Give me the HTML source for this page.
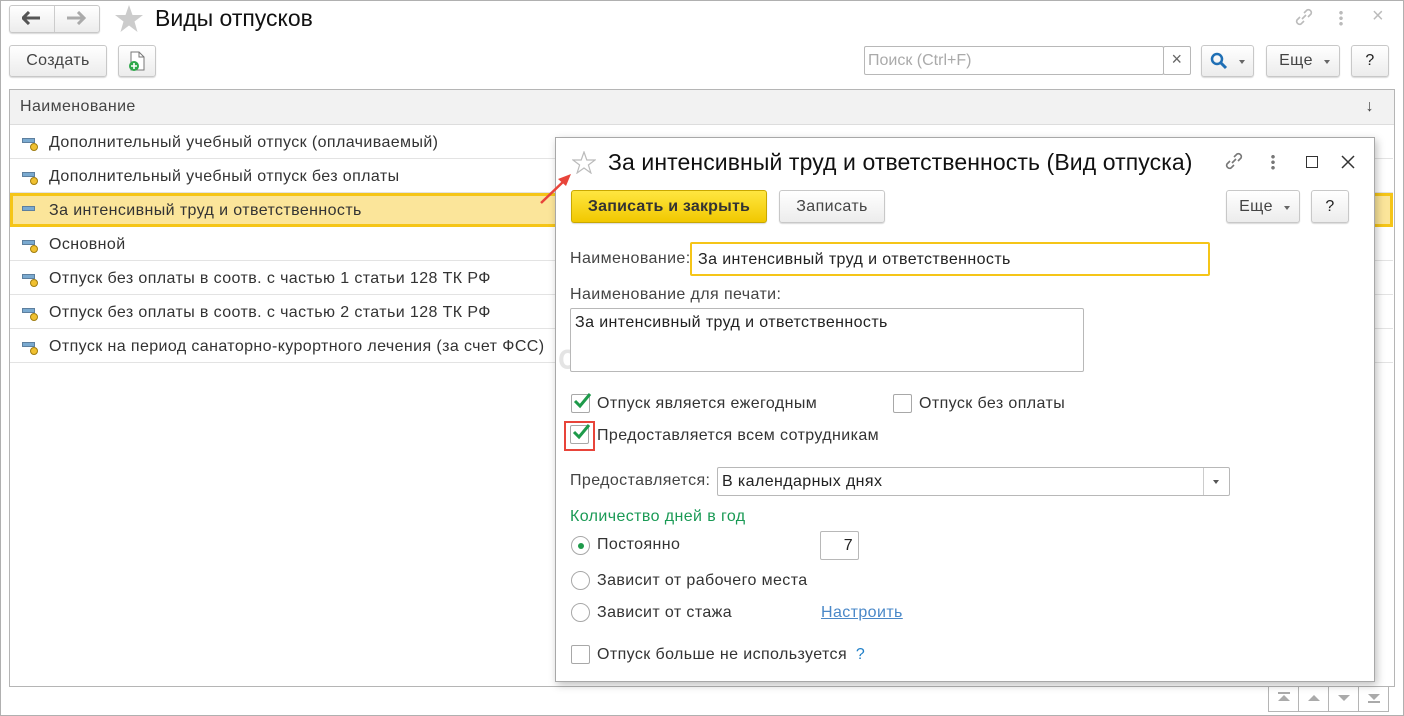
<!DOCTYPE html>
<html><head><meta charset="utf-8"><style>
*{box-sizing:border-box}
body{margin:0;width:1404px;height:716px;background:#fff;font-family:"Liberation Sans",Arial,sans-serif;font-size:16px;letter-spacing:.4px;color:#333;position:relative;overflow:hidden}
.a{position:absolute}
.btn{position:absolute;border:1px solid #c8c8c8;border-radius:3px;background:linear-gradient(#fff,#ececec);box-shadow:0 1px 1px rgba(0,0,0,.15);text-align:center;color:#444}
.row{position:absolute;left:10px;width:1383px;height:34px;border-bottom:1px solid #e3e3e3;line-height:35px}
.row span{position:absolute;left:39px}
.ic{position:absolute;left:12px;top:13px;width:13px;height:5px;background:#7aaad0;border:1px solid #5d7f9e}
.ic2{position:absolute;left:20px;top:18px;width:8px;height:8px;border-radius:50%;background:#f0c030;border:1px solid #a07d10}
.cb{position:absolute;width:19px;height:19px;border:1px solid #a8a8a8;border-radius:2px;background:#fff}
.rd{position:absolute;width:19px;height:19px;border:1px solid #a8a8a8;border-radius:50%;background:#fff}
.inp{position:absolute;border:1px solid #b8b8b8;border-radius:2px;background:#fff;padding-left:6px}
</style></head><body>
<div class="a" style="left:0;top:0;width:1404px;height:716px;border:1px solid #b0b0b0"></div>
<!-- nav -->
<div class="btn" style="left:9px;top:5px;width:91px;height:28px"></div>
<div class="a" style="left:54px;top:6px;width:1px;height:26px;background:#ccc"></div>
<svg class="a" style="left:22px;top:11px" width="20" height="14"><path d="M1 7H18M7 1L1 7L7 13" stroke="#555" stroke-width="3" fill="none"/></svg>
<svg class="a" style="left:66px;top:11px" width="20" height="14"><path d="M1 7H18M12 1L18 7L12 13" stroke="#aaa" stroke-width="3" fill="none"/></svg>
<svg class="a" style="left:114px;top:4px" width="30" height="29"><path d="M15 1L18.5 11H29L20.5 17.5L23.5 28L15 21.5L6.5 28L9.5 17.5L1 11H11.5Z" fill="#ccc"/></svg>
<div class="a" style="left:155px;top:5px;font-size:23px;letter-spacing:0;color:#111">Виды отпусков</div>
<svg class="a" style="left:1293px;top:6px" width="22" height="22"><path d="M9 13L13 9M7 11L4 14A3 3 0 0 0 8 18L11 15M15 11L18 8A3 3 0 0 0 14 4L11 7" stroke="#bbb" stroke-width="1.6" fill="none"/></svg>
<div class="a" style="left:1339px;top:10px;width:4px;height:16px;background:radial-gradient(circle,#bbb 1.6px,transparent 2px) 0 0/4px 5.5px"></div>
<div class="a" style="left:1372px;top:5px;font-size:20px;color:#bbb">×</div>
<!-- toolbar -->
<div class="btn" style="left:9px;top:45px;width:98px;height:32px;line-height:30px">Создать</div>
<div class="btn" style="left:118px;top:45px;width:38px;height:32px"></div>
<svg class="a" style="left:126px;top:50px" width="22" height="22"><path d="M5 2H13L18 7V20H5Z" fill="#fff" stroke="#777"/><path d="M13 2V7H18" fill="none" stroke="#777"/><circle cx="8" cy="16" r="5" fill="#2da84a"/><path d="M8 13V19M5 16H11" stroke="#fff" stroke-width="1.6"/></svg>
<div class="inp" style="left:864px;top:46px;width:300px;height:29px;line-height:28px;color:#aaa;padding-left:3px;letter-spacing:0">Поиск (Ctrl+F)</div>
<div class="inp" style="left:1163px;top:46px;width:28px;height:29px;line-height:25px;color:#666;padding:0;text-align:center;font-size:18px">×</div>
<div class="btn" style="left:1201px;top:45px;width:53px;height:32px"></div>
<svg class="a" style="left:1210px;top:52px" width="18" height="18"><circle cx="7" cy="7" r="5" stroke="#1f6fb5" stroke-width="2.5" fill="none"/><path d="M11 11L16 16" stroke="#1f6fb5" stroke-width="3"/></svg>
<div class="a" style="left:1239px;top:60px;border:3px solid transparent;border-top:4px solid #666"></div>
<div class="btn" style="left:1266px;top:45px;width:74px;height:32px;line-height:30px;padding-right:14px">Еще</div>
<div class="a" style="left:1324px;top:60px;border:3px solid transparent;border-top:4px solid #666"></div>
<div class="btn" style="left:1351px;top:45px;width:38px;height:32px;line-height:30px;color:#222">?</div>
<!-- list -->
<div class="a" style="left:9px;top:89px;width:1386px;height:598px;border:1px solid #b5b5b5"></div>
<div class="a" style="left:10px;top:90px;width:1384px;height:35px;background:#f2f2f2;border-bottom:1px solid #ddd;line-height:34px;padding-left:10px;color:#444">Наименование<span style="position:absolute;right:20px;font-size:16px">↓</span></div>
<div class="row" style="top:125px"><i class="ic"></i><i class="ic2"></i><span>Дополнительный учебный отпуск (оплачиваемый)</span></div>
<div class="row" style="top:159px"><i class="ic"></i><i class="ic2"></i><span>Дополнительный учебный отпуск без оплаты</span></div>
<div class="row" style="top:193px;background:#fbe59a;border:3px solid #f5c518;line-height:29px"><i class="ic" style="left:9px;top:10px"></i><span style="left:36px">За интенсивный труд и ответственность</span></div>
<div class="row" style="top:227px"><i class="ic"></i><i class="ic2"></i><span>Основной</span></div>
<div class="row" style="top:261px"><i class="ic"></i><i class="ic2"></i><span>Отпуск без оплаты в соотв. с частью 1 статьи 128 ТК РФ</span></div>
<div class="row" style="top:295px"><i class="ic"></i><i class="ic2"></i><span>Отпуск без оплаты в соотв. с частью 2 статьи 128 ТК РФ</span></div>
<div class="row" style="top:329px"><i class="ic"></i><i class="ic2"></i><span>Отпуск на период санаторно-курортного лечения (за счет ФСС)</span></div>
<!-- bottom nav -->
<div class="a" style="left:1268px;top:686px;width:121px;height:26px;border:1px solid #b5b5b5;border-top:none;display:flex">
<div style="flex:1;border-right:1px solid #b5b5b5;position:relative"><div class="a" style="left:9px;top:6px;width:12px;height:2px;background:#aaa"></div><div class="a" style="left:9px;top:9px;border:6px solid transparent;border-bottom:6px solid #aaa;border-top:0"></div></div>
<div style="flex:1;border-right:1px solid #b5b5b5;position:relative"><div class="a" style="left:9px;top:9px;border:6px solid transparent;border-bottom:6px solid #aaa;border-top:0"></div></div>
<div style="flex:1;border-right:1px solid #b5b5b5;position:relative"><div class="a" style="left:9px;top:9px;border:6px solid transparent;border-top:6px solid #aaa;border-bottom:0"></div></div>
<div style="flex:1;position:relative"><div class="a" style="left:9px;top:8px;border:6px solid transparent;border-top:6px solid #aaa;border-bottom:0"></div><div class="a" style="left:9px;top:15px;width:12px;height:2px;background:#aaa"></div></div>
</div>
<!-- dialog -->
<div class="a" style="left:555px;top:137px;width:820px;height:545px;background:#fff;border:1px solid #a8a8a8;box-shadow:2px 3px 8px rgba(0,0,0,.25)"></div>
<div class="a" style="left:558px;top:338px;font-size:32px;font-weight:bold;color:#e4e4e4;letter-spacing:1px">ꝏ БУХЭКСПЕРТ</div>
<svg class="a" style="left:572px;top:151px" width="24" height="23"><path d="M12 1L14.8 9H23L16.4 14L18.9 22L12 17L5.1 22L7.6 14L1 9H9.2Z" fill="none" stroke="#bbb" stroke-width="1.2"/></svg>
<svg class="a" style="left:538px;top:172px" width="36" height="34"><path d="M3 31L27 8" stroke="#e8443a" stroke-width="2.5"/><path d="M33 2L20 7L28 14Z" fill="#e8443a"/></svg>
<div class="a" style="left:608px;top:149px;font-size:23px;letter-spacing:.1px;color:#111">За интенсивный труд и ответственность (Вид отпуска)</div>
<svg class="a" style="left:1223px;top:150px" width="22" height="22"><path d="M9 13L13 9M7 11L4 14A3 3 0 0 0 8 18L11 15M15 11L18 8A3 3 0 0 0 14 4L11 7" stroke="#777" stroke-width="1.6" fill="none"/></svg>
<div class="a" style="left:1271px;top:154px;width:4px;height:16px;background:radial-gradient(circle,#777 1.6px,transparent 2px) 0 0/4px 5.5px"></div>
<div class="a" style="left:1306px;top:156px;width:12px;height:12px;border:1.5px solid #333"></div>
<svg class="a" style="left:1341px;top:155px" width="14" height="14"><path d="M1 1L13 13M13 1L1 13" stroke="#333" stroke-width="1.5"/></svg>
<div class="btn" style="left:571px;top:190px;width:196px;height:33px;background:linear-gradient(#ffe640,#f1c800);border-color:#c9a800;line-height:31px;font-weight:bold;color:#333;letter-spacing:.2px">Записать и закрыть</div>
<div class="btn" style="left:779px;top:190px;width:106px;height:33px;line-height:31px">Записать</div>
<div class="btn" style="left:1226px;top:190px;width:74px;height:33px;line-height:31px;padding-right:14px">Еще</div>
<div class="a" style="left:1284px;top:206px;border:3px solid transparent;border-top:4px solid #666"></div>
<div class="btn" style="left:1311px;top:190px;width:38px;height:33px;line-height:31px;color:#222">?</div>
<div class="a" style="left:570px;top:250px;color:#444">Наименование:</div>
<div class="a" style="left:690px;top:242px;width:520px;height:34px;border:2px solid #f5c518;border-radius:2px;line-height:31px;padding-left:6px;color:#222">За интенсивный труд и ответственность</div>
<div class="a" style="left:570px;top:286px;color:#444">Наименование для печати:</div>
<div class="inp" style="left:570px;top:308px;width:514px;height:64px;padding:5px 4px;color:#222">За интенсивный труд и ответственность</div>
<div class="cb" style="left:571px;top:394px"></div>
<svg class="a" style="left:572px;top:391px" width="20" height="20"><path d="M3 10L8 15L18 3" stroke="#1e9a4a" stroke-width="3" fill="none"/></svg>
<div class="a" style="left:597px;top:395px;color:#333">Отпуск является ежегодным</div>
<div class="cb" style="left:893px;top:394px"></div>
<div class="a" style="left:919px;top:395px;color:#333">Отпуск без оплаты</div>
<div class="a" style="left:564px;top:421px;width:31px;height:30px;border:2px solid #e8443a"></div>
<div class="cb" style="left:570px;top:425px"></div>
<svg class="a" style="left:571px;top:422px" width="20" height="20"><path d="M3 10L8 15L18 3" stroke="#1e9a4a" stroke-width="3" fill="none"/></svg>
<div class="a" style="left:597px;top:427px;color:#333">Предоставляется всем сотрудникам</div>
<div class="a" style="left:570px;top:472px;color:#444">Предоставляется:</div>
<div class="inp" style="left:717px;top:467px;width:513px;height:29px;line-height:28px;padding-left:4px;color:#222">В календарных днях</div>
<div class="a" style="left:1203px;top:468px;width:1px;height:27px;background:#ccc"></div>
<div class="a" style="left:1213px;top:480px;border:3px solid transparent;border-top:4px solid #555"></div>
<div class="a" style="left:570px;top:508px;color:#1a9a55">Количество дней в год</div>
<div class="rd" style="left:571px;top:536px"></div>
<div class="a" style="left:578px;top:543px;width:6px;height:6px;border-radius:50%;background:#1e9a4a"></div>
<div class="a" style="left:597px;top:536px;color:#333">Постоянно</div>
<div class="inp" style="left:820px;top:531px;width:39px;height:29px;line-height:28px;text-align:right;padding-right:5px;color:#222">7</div>
<div class="rd" style="left:571px;top:571px"></div>
<div class="a" style="left:597px;top:572px;color:#333">Зависит от рабочего места</div>
<div class="rd" style="left:571px;top:603px"></div>
<div class="a" style="left:597px;top:604px;color:#333">Зависит от стажа</div>
<div class="a" style="left:821px;top:604px;color:#4a88c8;text-decoration:underline">Настроить</div>
<div class="cb" style="left:571px;top:645px"></div>
<div class="a" style="left:597px;top:646px;color:#333">Отпуск больше не используется <span style="color:#1f7fc8;margin-left:4px">?</span></div>
</body></html>
